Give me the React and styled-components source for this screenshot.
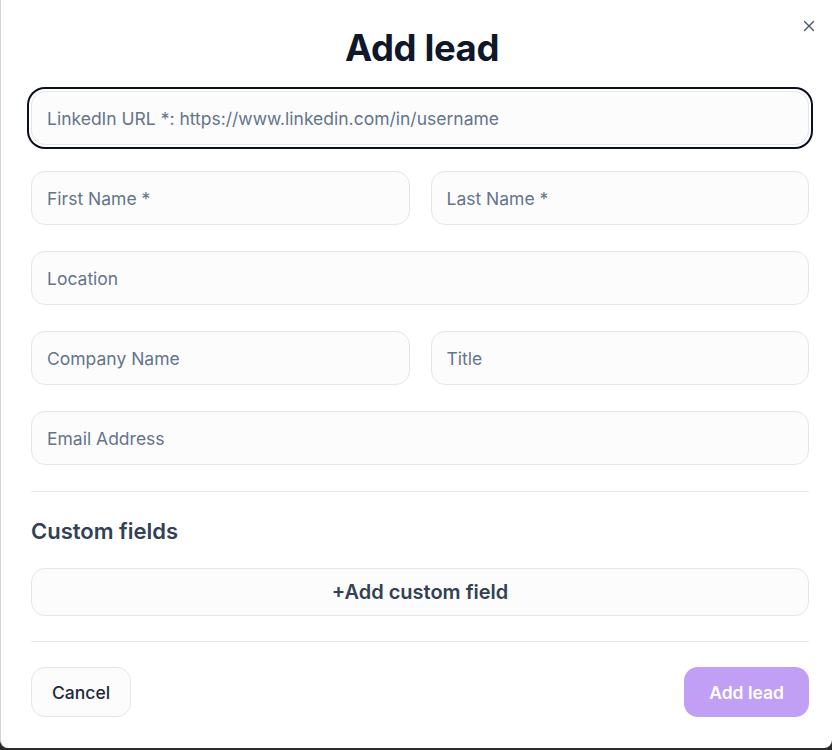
import React from 'react';
import styled, { createGlobalStyle } from 'styled-components';

const GlobalStyle = createGlobalStyle`
    html, body {
        margin: 0;
        padding: 0;
        background: #2b2b2b;
        font-family: Inter, "Noto Sans", sans-serif;
    }
    * {
        box-sizing: border-box;
    }
`;

export default function App() {
    return (
        <>
            <GlobalStyle />
            <Dialog>
                <CloseButton aria-label="Close">
                    <svg width="18" height="18" viewBox="0 0 24 24" fill="none" stroke="currentColor" strokeWidth="1.8" strokeLinecap="round">
                        <path d="M18 6 6 18" />
                        <path d="m6 6 12 12" />
                    </svg>
                </CloseButton>
                <Title>Add lead</Title>
                <Fields>
                    <Input $focused placeholder="LinkedIn URL *: https://www.linkedin.com/in/username" />
                    <Row>
                        <Input placeholder="First Name *" />
                        <Input placeholder="Last Name *" />
                    </Row>
                    <Input placeholder="Location" />
                    <Row>
                        <Input placeholder="Company Name" />
                        <Input placeholder="Title" />
                    </Row>
                    <Input placeholder="Email Address" />
                    <Divider />
                </Fields>
                <SectionTitle>Custom fields</SectionTitle>
                <WideButton>+Add custom field</WideButton>
                <Divider $spaced />
                <Footer>
                    <GhostButton>Cancel</GhostButton>
                    <PrimaryButton disabled>Add lead</PrimaryButton>
                </Footer>
            </Dialog>
        </>
    );
}

const Dialog = styled.div`
    position: relative;
    width: 832px;
    height: 748px;
    background: #ffffff;
    border-left: 1px solid #d4d4d8;
    border-radius: 0 0 8px 8px;
    padding: 26px 23px 31px 30px;
    display: flex;
    flex-direction: column;
`;

const CloseButton = styled.button`
    position: absolute;
    top: 17px;
    right: 14px;
    width: 18px;
    height: 18px;
    padding: 0;
    border: none;
    background: none;
    color: #475569;
    display: flex;
    align-items: center;
    justify-content: center;
`;

const Title = styled.h1`
    margin: 0 0 21px;
    text-align: center;
    font-size: 36.5px;
    line-height: 44px;
    font-weight: 700;
    letter-spacing: -0.4px;
    color: #0f172a;
    padding-left: 4px;
`;

const Fields = styled.div`
    display: flex;
    flex-direction: column;
    gap: 26px;
`;

const Row = styled.div`
    display: grid;
    grid-template-columns: 1fr 1fr;
    gap: 21px;
`;

const Input = styled.input`
    width: 100%;
    height: 54px;
    padding: 0 15px;
    border: 1px solid #e4e5ef;
    border-radius: 14px;
    background: #fcfcfd;
    font-family: inherit;
    font-size: 17.5px;
    color: #0f172a;
    outline: none;
    box-shadow: ${(p) => (p.$focused ? '0 0 0 2px #ffffff, 0 0 0 4px #0b1020' : 'none')};

    &::placeholder {
        color: #64748b;
    }
`;

const Divider = styled.hr`
    width: 100%;
    height: 1px;
    margin: ${(p) => (p.$spaced ? '25px 0 25px' : '0')};
    border: none;
    background: #e5e7eb;
`;

const SectionTitle = styled.h2`
    margin: 25px 0 23px;
    font-size: 22px;
    line-height: 28px;
    font-weight: 600;
    color: #334155;
`;

const WideButton = styled.button`
    width: 100%;
    height: 50px;
    border: 1px solid #e4e5ef;
    border-radius: 14px;
    background: #fcfcfd;
    font-family: inherit;
    font-size: 20px;
    font-weight: 600;
    color: #334155;
`;

const Footer = styled.div`
    display: flex;
    justify-content: space-between;
    align-items: center;
`;

const GhostButton = styled.button`
    height: 50px;
    padding: 0 20px;
    border: 1px solid #e4e5ef;
    border-radius: 14px;
    background: #fcfcfd;
    font-family: inherit;
    font-size: 17.5px;
    font-weight: 500;
    color: #1e293b;
`;

const PrimaryButton = styled.button`
    height: 50px;
    padding: 0 25px;
    border: none;
    border-radius: 14px;
    background: #c09ff4;
    font-family: inherit;
    font-size: 17.5px;
    font-weight: 600;
    color: #ffffff;
`;
